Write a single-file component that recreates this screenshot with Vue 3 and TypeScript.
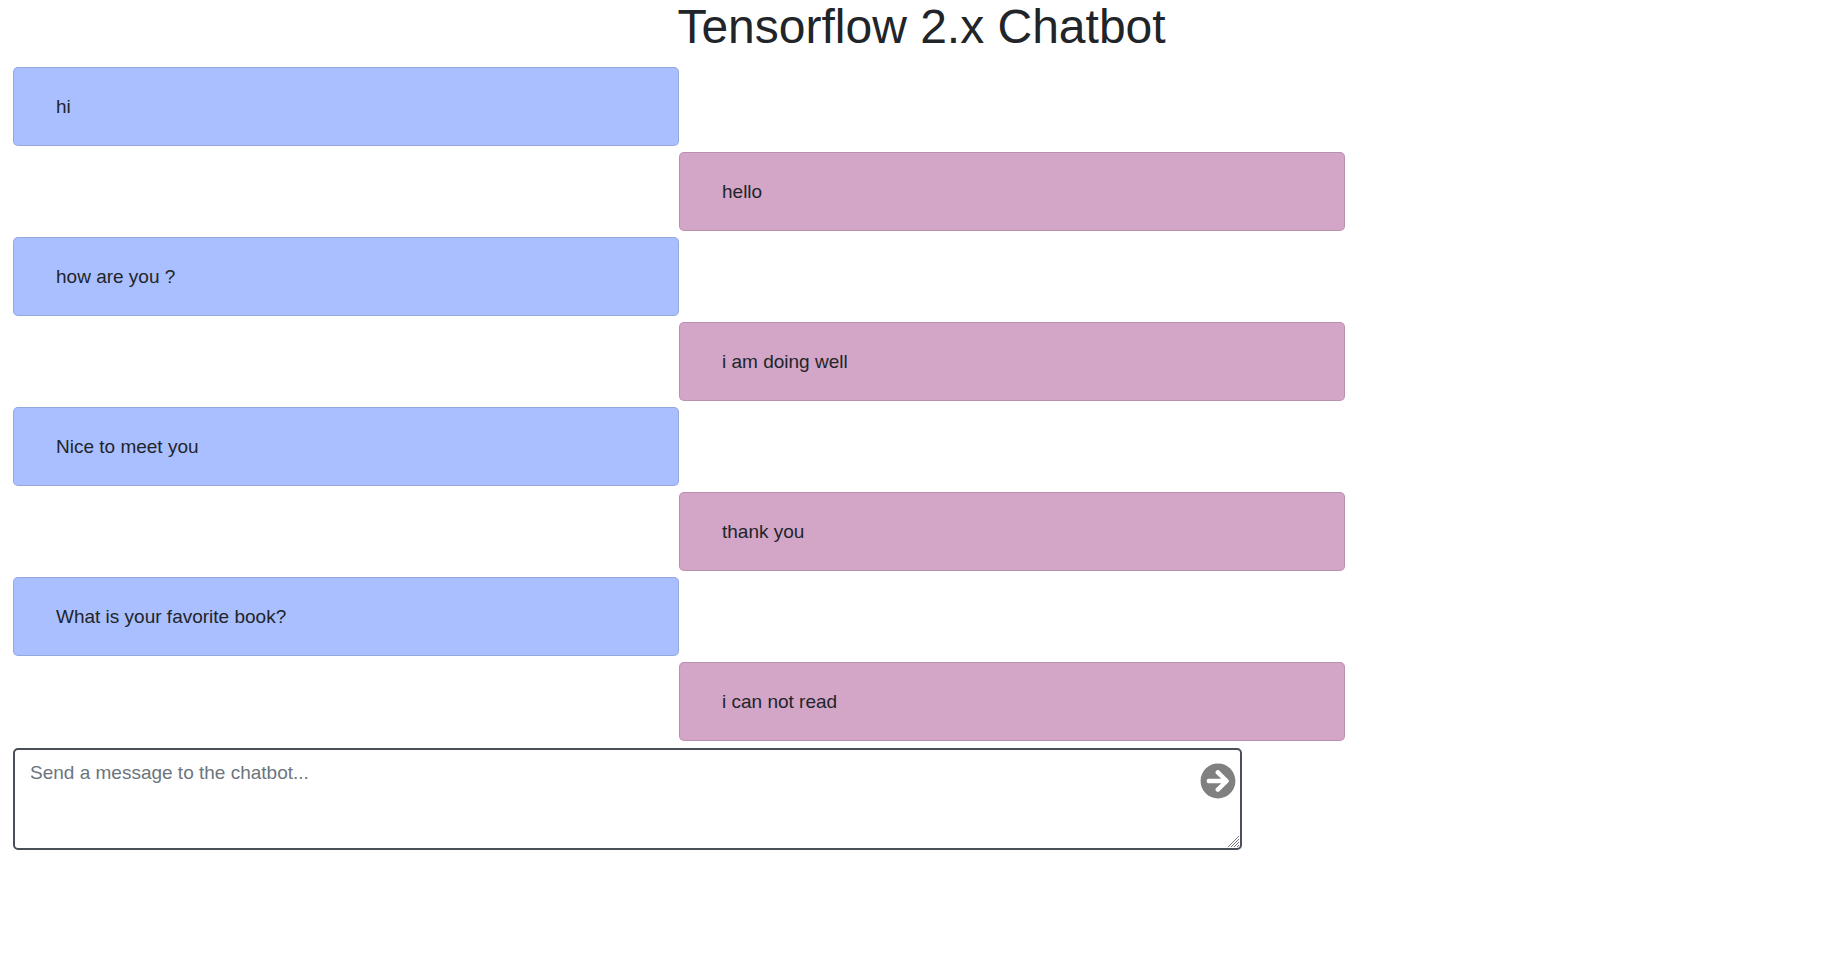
<script setup lang="ts">
import { ref } from 'vue'

interface Message {
  id: number
  from: 'user' | 'bot'
  text: string
}

const messages = ref<Message[]>([
  { id: 1, from: 'user', text: 'hi' },
  { id: 2, from: 'bot', text: 'hello' },
  { id: 3, from: 'user', text: 'how are you ?' },
  { id: 4, from: 'bot', text: 'i am doing well' },
  { id: 5, from: 'user', text: 'Nice to meet you' },
  { id: 6, from: 'bot', text: 'thank you' },
  { id: 7, from: 'user', text: 'What is your favorite book?' },
  { id: 8, from: 'bot', text: 'i can not read' },
])

const draft = ref('')

function send(): void {
  const text = draft.value.trim()
  if (!text) return
  messages.value.push({ id: messages.value.length + 1, from: 'user', text })
  draft.value = ''
}
</script>

<template>
  <main class="page">
    <h1 class="title">Tensorflow 2.x Chatbot</h1>
    <ul class="messages">
      <li v-for="m in messages" :key="m.id" class="message" :class="m.from">{{ m.text }}</li>
    </ul>
    <form class="composer" @submit.prevent="send">
      <textarea
        v-model="draft"
        class="draft"
        rows="3"
        aria-label="Message"
        placeholder="Send a message to the chatbot..."
      ></textarea>
      <svg class="grip" viewBox="0 0 11 11" aria-hidden="true">
        <path d="M0 11L11 0M3 11L11 3M6 11L11 6M9 11L11 9" stroke="#777" stroke-width="1" />
      </svg>
      <button class="send" type="submit" aria-label="Send">
        <svg class="icon" viewBox="0 0 512 512" aria-hidden="true">
          <path
            fill="currentColor"
            d="M256 8c137 0 248 111 248 248S393 504 256 504 8 393 8 256 119 8 256 8zm-28.9 143.6l75.5 72.4H120c-13.3 0-24 10.7-24 24v16c0 13.3 10.7 24 24 24h182.6l-75.5 72.4c-9.7 9.3-9.9 24.8-.4 34.3l11 10.9c9.4 9.4 24.6 9.4 33.9 0L404.3 273c9.4-9.4 9.4-24.6 0-33.9L271.6 106.3c-9.4-9.4-24.6-9.4-33.9 0l-11 10.9c-9.5 9.6-9.3 25.1.4 34.4z"
          />
        </svg>
      </button>
    </form>
  </main>
</template>

<style>
body {
  margin: 0;
  background: #fff;
}
</style>

<style scoped>
.page {
  color: #212529;
  font-family: 'Liberation Sans', Arial, sans-serif;
  font-size: 19px;
  line-height: 29px;
}

.title {
  margin: 0 0 13px;
  padding-right: 5px;
  font-size: 48px;
  font-weight: 500;
  line-height: 54px;
  text-align: center;
}

.messages {
  display: flex;
  flex-direction: column;
  gap: 6px;
  width: calc(75% - 54px);
  margin: 0 0 7px 13px;
  padding: 0;
  list-style: none;
}

.message {
  box-sizing: border-box;
  width: 50%;
  padding: 24px 42px;
  border: 1px solid rgba(0, 0, 0, 0.125);
  border-radius: 5px;
  overflow-wrap: break-word;
}

.user {
  align-self: flex-start;
  background: #aabfff;
}

.bot {
  align-self: flex-end;
  background: #d3a6c8;
}

.composer {
  position: relative;
  width: calc(100% * 2 / 3 - 3px);
  margin-left: 13px;
}

.draft {
  display: block;
  box-sizing: border-box;
  width: 100%;
  height: 102px;
  padding: 8px 15px;
  border: 2px solid #495057;
  border-radius: 5px;
  outline: 0;
  background: #fff;
  color: #495057;
  font: inherit;
  resize: vertical;
}

.draft::placeholder {
  color: #6c757d;
  opacity: 1;
}

.draft::-webkit-resizer {
  background: transparent;
}

.grip {
  position: absolute;
  right: 3px;
  bottom: 3px;
  width: 11px;
  height: 11px;
  pointer-events: none;
}

.send {
  position: absolute;
  top: 15px;
  right: 6px;
  padding: 0;
  border: 0;
  background: none;
  color: #808080;
  cursor: pointer;
}

.icon {
  display: block;
  width: 36px;
  height: 36px;
}
</style>
